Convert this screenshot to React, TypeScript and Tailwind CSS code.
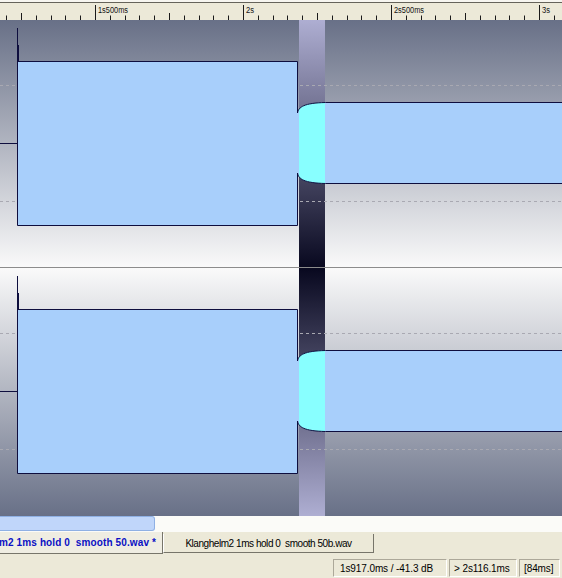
import React from "react";

const NAVY = "#0e0e3e";
const WAVE =
  "M17.5,41.5 H297.5 V93 C298.5,87 304,83 325.5,82.5 H563 V163.5 H325.5 C304,163 298.5,159 297.5,153 V205.5 H17.5 Z";

function Channel({ first }: { first: boolean }) {
  const p = first ? "c1" : "c2";
  const dark = "#687087";
  const light = "#fafafa";
  const lav = "#aeaed2";
  const navy = "#08081f";
  return (
    <svg width={562} height={248} className="block shrink-0">
      <defs>
        <linearGradient id={`${p}bg`} x1="0" y1="0" x2="0" y2="1">
          <stop offset="0" stopColor={first ? dark : light} />
          <stop offset="1" stopColor={first ? light : dark} />
        </linearGradient>
        <linearGradient id={`${p}sel`} x1="0" y1="0" x2="0" y2="1">
          <stop offset="0" stopColor={first ? lav : navy} />
          <stop offset="1" stopColor={first ? navy : lav} />
        </linearGradient>
        <clipPath id={`${p}clip`}>
          <rect x="299" y="0" width="26" height="248" />
        </clipPath>
      </defs>
      <rect x="0" y="0" width="562" height="248" fill={`url(#${p}bg)`} />
      <rect x="299" y="0" width="26" height="248" fill={`url(#${p}sel)`} />
      <line x1="0" x2="562" y1="65.5" y2="65.5" stroke="#a9a9b2" strokeDasharray="3 3" />
      <line x1="0" x2="562" y1="181.5" y2="181.5" stroke="#a9a9b2" strokeDasharray="3 3" />
      <path d={WAVE} fill="#a8cffb" />
      <path d={WAVE} fill="#88ffff" clipPath={`url(#${p}clip)`} />
      <path d={WAVE} fill="none" stroke={NAVY} strokeWidth="1" />
      <line x1="0" x2="17.5" y1="123.5" y2="123.5" stroke={NAVY} />
      <line x1="17.5" x2="17.5" y1="8" y2="164" stroke={NAVY} />
      <rect x="17" y="25" width="2" height="16" fill={NAVY} />
      {first && <line x1="0" x2="562" y1="247.5" y2="247.5" stroke="#8c8c8c" />}
    </svg>
  );
}

function Ruler() {
  const ticks: React.ReactNode[] = [];
  for (let i = -6; i <= 32; i++) {
    const x = Math.round(95 + i * 14.8) + 0.5;
    if (x < 0 || x > 562) continue;
    const m = ((i % 10) + 10) % 10;
    const y1 = m === 0 ? 2 : m === 5 ? 10 : 12.5;
    ticks.push(<line key={i} x1={x} x2={x} y1={y1} y2={17} stroke="#1a1a1a" strokeWidth="1" />);
  }
  const labels: [string, number, number][] = [
    ["1s500ms", 98, 30],
    ["2s", 246, 8],
    ["2s500ms", 394, 30],
    ["3s", 542, 8],
  ];
  return (
    <div className="flex flex-col h-[20px] shrink-0">
      <div className="h-[2px] bg-[#f6f5ef]" />
      <div className="h-px bg-[#65635a]" />
      <svg width={562} height={17} className="block bg-[#ece9d8]">
        {ticks}
        {labels.map(([t, x, w]) => (
          <text
            key={t}
            x={x}
            y={9.5}
            fontSize="8.5"
            fill="#111"
            textLength={w}
            lengthAdjust="spacingAndGlyphs"
            style={{ fontFamily: "'Liberation Sans', Arial, sans-serif" }}
          >
            {t}
          </text>
        ))}
      </svg>
    </div>
  );
}

export default function App() {
  return (
    <div className="w-[562px] h-[578px] overflow-hidden flex flex-col bg-[#ece9d8] font-['Liberation_Sans',Arial,sans-serif] text-black">
      <Ruler />
      <div className="flex flex-col h-[496px] shrink-0">
        <Channel first />
        <Channel first={false} />
      </div>
      <div className="h-[16px] shrink-0 flex bg-[#fbfbf8]">
        <div className="w-[155px] h-[15px] bg-[#c0d6fa] border border-l-0 border-[#8fb0e4] rounded-r-[3px]" />
      </div>
      <div className="h-[23px] shrink-0 flex items-start">
        <div className="w-[163px] h-[22px] bg-[#efede2] border-r border-b border-[#77756a] flex items-center justify-end pr-[6px] overflow-hidden whitespace-nowrap font-bold text-[10px] tracking-[0.12px] text-[#0a10c4]">
          Klanghelm2 1ms hold 0&nbsp; smooth 50.wav&nbsp;*
        </div>
        <div className="mt-[2px] w-[211px] h-[19px] bg-[#ece9d8] border-l border-l-white border-r border-b border-r-[#77756a] border-b-[#77756a] flex items-center justify-center whitespace-nowrap text-[10px] tracking-[-0.45px]">
          Klanghelm2 1ms hold 0&nbsp; smooth 50b.wav
        </div>
      </div>
      <div className="h-[23px] shrink-0 flex justify-end items-start pt-[4px] pr-[2px] gap-[2px] text-[10px] whitespace-nowrap">
        <div className="w-[114px] h-[18px] border-t border-l border-[#aca899] border-r border-b border-r-white border-b-white flex items-center pl-[6px] tracking-[-0.1px]">
          1s917.0ms / -41.3 dB
        </div>
        <div className="w-[68px] h-[18px] border-t border-l border-[#aca899] border-r border-b border-r-white border-b-white flex items-center pl-[4px] tracking-[-0.1px]">
          &gt; 2s116.1ms
        </div>
        <div className="w-[41px] h-[18px] border-t border-l border-[#aca899] border-r border-b border-r-white border-b-white flex items-center pl-[4px] tracking-[-0.1px]">
          [84ms]
        </div>
      </div>
    </div>
  );
}
